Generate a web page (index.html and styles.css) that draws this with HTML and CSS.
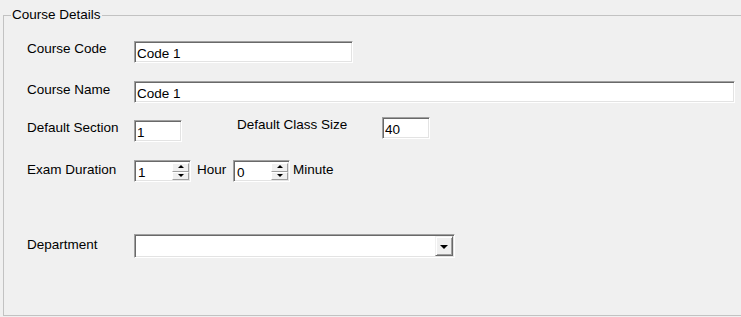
FILE: index.html
```html
<!DOCTYPE html>
<html lang="en">
<head>
  <meta charset="UTF-8" />
  <title>Course Details</title>
  <link rel="stylesheet" href="styles.css">
</head>
<body>
  <fieldset class="group">
    <legend>Course Details</legend>

    <div class="group-body">
      <div class="row row-code">
        <label class="field-label" for="courseCode">Course Code</label>
        <input class="textbox w-code" id="courseCode" type="text" value="Code 1">
      </div>

      <div class="row row-name">
        <label class="field-label" for="courseName">Course Name</label>
        <input class="textbox w-name" id="courseName" type="text" value="Code 1">
      </div>

      <div class="row row-section">
        <label class="field-label" for="defaultSection">Default Section</label>
        <input class="textbox w-small" id="defaultSection" type="text" value="1">
        <label class="class-size-label" for="classSize">Default Class Size</label>
        <input class="textbox w-small class-size-box" id="classSize" type="text" value="40">
      </div>

      <div class="row row-duration">
        <label class="field-label" for="examHour">Exam Duration</label>
        <div class="spinner">
          <input class="spinner-text" id="examHour" type="text" value="1">
          <div class="spin-buttons">
            <span class="spin-btn up"></span>
            <span class="spin-btn down"></span>
          </div>
        </div>
        <span class="unit unit-hour">Hour</span>
        <div class="spinner">
          <input class="spinner-text" id="examMinute" type="text" value="0">
          <div class="spin-buttons">
            <span class="spin-btn up"></span>
            <span class="spin-btn down"></span>
          </div>
        </div>
        <span class="unit unit-minute">Minute</span>
      </div>

      <div class="row row-dept">
        <label class="field-label" for="department">Department</label>
        <div class="combo" id="department">
          <div class="combo-text"></div>
          <span class="combo-btn"></span>
        </div>
      </div>
    </div>
  </fieldset>
</body>
</html>
```

FILE: styles.css
```css
body {
  margin: 0;
  background: #f0f0f0;
  font-family: "Liberation Sans", Arial, sans-serif;
  font-size: 13.5px;
  color: #000;
  overflow: hidden;
  height: 317px;
}

/* Group box */
.group {
  box-sizing: border-box;
  width: 760px;
  height: 309px;
  margin: 7px 0 0 3px;
  padding: 0;
  border: 1px solid #c2c2c2;
}

.group legend {
  margin-left: 7px;
  padding: 0 1px;
  line-height: 16px;
}

.group-body {
  padding: 18px 0 0 23px;
}

.row {
  display: flex;
  align-items: flex-start;
  height: 22px;
}

.row-name { margin-top: 18px; }
.row-section { margin-top: 14px; height: 25px; }
.row-duration { margin-top: 18px; }
.row-dept { margin-top: 52px; height: 24px; }

.field-label {
  width: 107px;
  line-height: 15px;
  flex-shrink: 0;
}

.row-code .field-label { margin-top: 0; }
.row-name .field-label { margin-top: 1px; }
.row-section .field-label { margin-top: 3px; }
.row-duration .field-label { margin-top: 2px; }
.row-dept .field-label { margin-top: 3px; }

/* Fixed3D text box */
.textbox {
  box-sizing: border-box;
  height: 22px;
  margin: 0;
  padding: 2px 1px 0 2px;
  font: inherit;
  color: #000;
  background: #fff;
  border: 1px solid;
  border-color: #a0a0a0 #fff #fff #a0a0a0;
  box-shadow: inset 1px 1px 0 #696969, inset -1px -1px 0 #e3e3e3;
  outline: none;
}

.w-code { width: 219px; }
.w-name { width: 601px; }
.w-small { width: 48px; }

.row-section .w-small { margin-top: 3px; }
.row-section .class-size-box { margin-top: 0; }

.class-size-label {
  width: 145px;
  margin-left: 55px;
  line-height: 15px;
}

/* NumericUpDown */
.spinner {
  box-sizing: border-box;
  display: flex;
  width: 57px;
  height: 22px;
  background: #fff;
  border: 1px solid;
  border-color: #a0a0a0 #fff #fff #a0a0a0;
  box-shadow: inset 1px 1px 0 #696969, inset -1px -1px 0 #e3e3e3;
}

.spinner-text {
  box-sizing: border-box;
  width: 37px;
  height: 20px;
  margin: 0;
  padding: 3px 0 0 3px;
  font: inherit;
  border: none;
  background: transparent;
  outline: none;
}

.spin-buttons {
  display: flex;
  flex-direction: column;
  width: 17px;
  margin: 2px 1px 1px auto;
}

.spin-btn {
  position: relative;
  flex: 1;
  box-sizing: border-box;
  background: #f0f0f0;
  border: 1px solid;
  border-color: #fff #a0a0a0 #a0a0a0 #fff;
}

.spin-btn::after {
  content: "";
  position: absolute;
  left: 50%;
  top: 50%;
  margin: -2px 0 0 -3px;
  border-left: 3px solid transparent;
  border-right: 3px solid transparent;
}

.spin-btn.up::after { border-bottom: 3px solid #000; }
.spin-btn.down::after { border-top: 3px solid #000; }

.unit {
  line-height: 15px;
  margin-top: 2px;
}

.unit-hour {
  width: 36px;
  margin-left: 6px;
}

.unit-minute { margin-left: 3px; }

/* ComboBox */
.combo {
  box-sizing: border-box;
  display: flex;
  width: 321px;
  height: 24px;
  background: #fff;
  border: 1px solid;
  border-color: #a0a0a0 #fff #fff #a0a0a0;
  box-shadow: inset 1px 1px 0 #696969, inset -1px -1px 0 #e3e3e3;
}

.combo-text { flex: 1; }

.combo-btn {
  position: relative;
  box-sizing: border-box;
  width: 18px;
  margin: 1px 1px 1px 0;
  background: #f0f0f0;
  border: 1px solid;
  border-color: #f0f0f0 #696969 #696969 #f0f0f0;
  box-shadow: inset 1px 1px 0 #fff, inset -1px -1px 0 #a0a0a0;
}

.combo-btn::after {
  content: "";
  position: absolute;
  left: 50%;
  top: 50%;
  margin: -1px 0 0 -4px;
  border-left: 4px solid transparent;
  border-right: 4px solid transparent;
  border-top: 4px solid #000;
}
```
